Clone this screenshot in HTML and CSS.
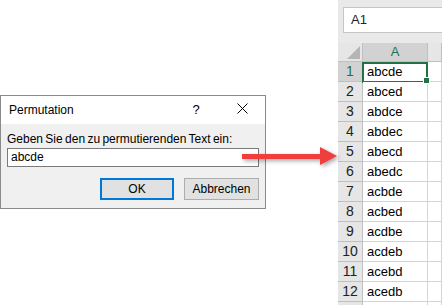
FILE: index.html
```html
<!DOCTYPE html>
<html>
<head>
  <title>Permutation</title>
  <meta http-equiv="content-type" content="text/html; charset=utf-8" />
  <link rel="stylesheet" href="styles.css">
</head>
<body>
  <div class="stage">
    <div class="left">
      <div class="dialog">
        <div class="titlebar">
          <span class="title">Permutation</span>
          <span class="help">?</span>
          <svg class="close" width="11" height="11" viewBox="0 0 11 11">
            <path d="M0.5 0.5 L10.5 10.5 M10.5 0.5 L0.5 10.5" stroke="#000" stroke-width="1" fill="none" />
          </svg>
        </div>
        <div class="dlgbody">
          <div class="prompt">Geben Sie den zu permutierenden Text ein:</div>
          <div class="textbox">abcde</div>
          <div class="buttons">
            <button class="btn default">OK</button>
            <button class="btn">Abbrechen</button>
          </div>
        </div>
      </div>
    </div>

    <div class="excel">
      <div class="namebar">
        <div class="namebox">A1</div>
      </div>
      <div class="sheet">
        <div class="corner"><div class="tri"></div></div>
        <div class="colhead sel">A</div>
        <div class="colhead"></div>

        <div class="rowhead sel">1</div><div class="cell active">abcde</div><div class="cell"></div>
        <div class="rowhead">2</div><div class="cell">abced</div><div class="cell"></div>
        <div class="rowhead">3</div><div class="cell">abdce</div><div class="cell"></div>
        <div class="rowhead">4</div><div class="cell">abdec</div><div class="cell"></div>
        <div class="rowhead">5</div><div class="cell">abecd</div><div class="cell"></div>
        <div class="rowhead">6</div><div class="cell">abedc</div><div class="cell"></div>
        <div class="rowhead">7</div><div class="cell">acbde</div><div class="cell"></div>
        <div class="rowhead">8</div><div class="cell">acbed</div><div class="cell"></div>
        <div class="rowhead">9</div><div class="cell">acdbe</div><div class="cell"></div>
        <div class="rowhead">10</div><div class="cell">acdeb</div><div class="cell"></div>
        <div class="rowhead">11</div><div class="cell">acebd</div><div class="cell"></div>
        <div class="rowhead">12</div><div class="cell">acedb</div><div class="cell"></div>
        <div class="rowhead"></div><div class="cell"></div><div class="cell"></div>
      </div>
    </div>

    <!-- red arrow from the dialog to the sheet -->
    <svg class="arrow" width="100" height="28" viewBox="0 0 100 28">
      <path d="M2 11 H80 V4 L97 13 L80 22 V16 H2 Z" fill="#f03e3e" />
    </svg>
  </div>
</body>
</html>
```

FILE: styles.css
```css
html, body {
  margin: 0;
  padding: 0;
  background: #fff;
}
.stage {
  position: relative;
  width: 442px;
  height: 305px;
  overflow: hidden;
  display: flex;
  font-family: "Liberation Sans", Arial, sans-serif;
}
.left {
  width: 338px;
  padding-top: 95px;
  box-sizing: border-box;
}

/* dialog */
.dialog {
  width: 266px;
  box-sizing: border-box;
  border: 1px solid #8a8a8a;
  background: #f0f0f0;
  font-size: 12px;
  color: #000;
}
.titlebar {
  height: 28px;
  background: #fff;
  display: flex;
  align-items: center;
  padding: 0 17px 0 8px;
}
.title {
  flex: 1;
  line-height: 16px;
  margin-top: -1px;
}
.help {
  width: 12px;
  text-align: center;
  font-size: 13px;
  margin-right: 35px;
  margin-top: -2px;
}
.close {
  display: block;
  margin-top: -3px;
}
.dlgbody {
  padding: 8px 6px 8px 6px;
}
.prompt {
  line-height: 15px;
  word-spacing: -1px;
}
.textbox {
  margin-top: 1px;
  height: 19px;
  box-sizing: border-box;
  border: 1px solid #7a7a7a;
  background: #fff;
  padding-left: 3px;
  line-height: 17px;
}
.buttons {
  display: flex;
  justify-content: flex-end;
  gap: 10px;
  margin-top: 11px;
}
.btn {
  height: 22px;
  width: 75px;
  box-sizing: border-box;
  border: 1px solid #adadad;
  background: #e1e1e1;
  font-family: "Liberation Sans", Arial, sans-serif;
  font-size: 12px;
  color: #000;
  padding: 0;
}
.btn.default {
  width: 74px;
  border: 2px solid #0078d7;
}

/* excel */
.excel {
  width: 104px;
  background: #e9e9e9;
  font-size: 13px;
}
.namebar {
  height: 43px;
  padding: 7px 0 0 5px;
  box-sizing: border-box;
  overflow: hidden;
}
.namebox {
  width: 110px;
  height: 26px;
  box-sizing: border-box;
  border: 1px solid #c6c6c6;
  background: #fff;
  padding-left: 7px;
  line-height: 24px;
  color: #222;
}
.sheet {
  display: grid;
  grid-template-columns: 25px 65px 1fr;
  grid-template-rows: 19px repeat(13, 20px);
}
.corner {
  background: #e6e6e6;
  border-right: 1px solid #c0c0c0;
  border-bottom: 1px solid #c0c0c0;
  display: flex;
  justify-content: flex-end;
  align-items: flex-end;
  padding: 0 2px 2px 0;
}
.tri {
  width: 13px;
  height: 13px;
  background: #b5b5b5;
  clip-path: polygon(100% 0, 100% 100%, 0 100%);
}
.colhead {
  background: #e6e6e6;
  border-right: 1px solid #c0c0c0;
  border-bottom: 1px solid #c0c0c0;
  text-align: center;
  line-height: 18px;
  color: #222;
}
.rowhead {
  background: #e6e6e6;
  border-right: 1px solid #c0c0c0;
  border-bottom: 1px solid #c0c0c0;
  text-align: center;
  line-height: 19px;
  font-size: 14px;
  color: #222;
}
.colhead.sel, .rowhead.sel {
  background: #d2d2d2;
  color: #217346;
}
.cell {
  background: #fff;
  border-right: 1px solid #d4d4d4;
  border-bottom: 1px solid #d4d4d4;
  padding-left: 4px;
  line-height: 20px;
  color: #000;
  position: relative;
}
.cell.active::after {
  content: "";
  position: absolute;
  top: 0;
  left: -1px;
  right: -1px;
  bottom: -2px;
  border: 2px solid #217346;
}
.cell.active::before {
  content: "";
  position: absolute;
  right: -3px;
  bottom: -3px;
  width: 5px;
  height: 5px;
  background: #217346;
  border: 1px solid #fff;
  z-index: 1;
}

.arrow {
  position: absolute;
  left: 240px;
  top: 143px;
  filter: drop-shadow(2px 2px 2px rgba(0, 0, 0, 0.35));
}
```
